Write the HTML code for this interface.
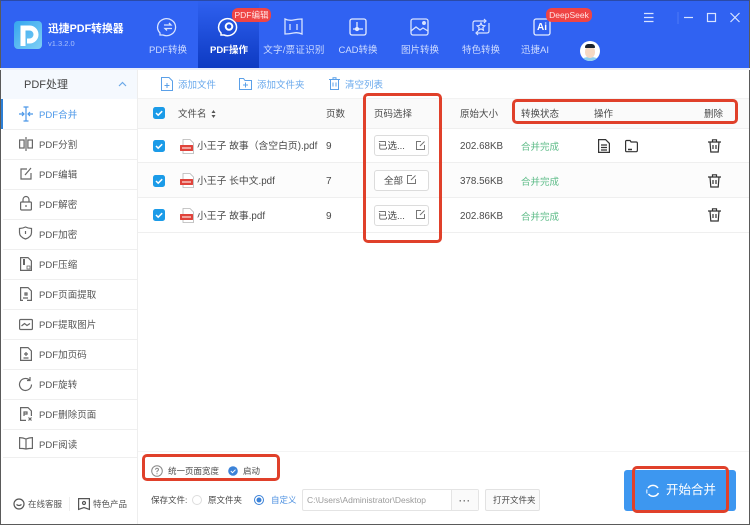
<!DOCTYPE html>
<html><head><meta charset="utf-8"><style>
*{margin:0;padding:0;box-sizing:border-box}
html,body{width:750px;height:525px;overflow:hidden;background:#fff}
body{position:relative;font-family:"Liberation Sans","Noto Sans CJK SC",sans-serif;font-size:9.5px;color:#4a4a4a;filter:blur(.3px)}
.a{position:absolute}
.t{position:absolute;white-space:nowrap;line-height:14px;transform:translateY(2px)}
.n{transform:none}
.hd{color:#cfdcff;font-size:9.5px;top:42px;width:70px;text-align:center}
.sb{left:39px;color:#555;font-size:9.5px;letter-spacing:.05px}
.line{position:absolute;background:#efefef;height:1px}
.box{position:absolute;border:3px solid #e0402a;border-radius:5px}
.chk{position:absolute;left:153px;width:12px;height:12px;border-radius:2.5px;background:#1b9be8}
.chk svg{display:block}
.btn{position:absolute;left:374px;width:55px;height:21px;border:1px solid #dcdcdc;border-radius:3px;background:#fff}
svg{position:absolute;overflow:visible}
</style></head><body>

<!-- header -->
<div class="a" style="left:0;top:0;width:750px;height:68px;background:#3062f2"></div>
<div class="a" style="left:198px;top:0;width:61px;height:68px;background:linear-gradient(#2f61f0,#0d3ac2)"></div>

<!-- logo -->
<div class="a" style="left:14px;top:21px;width:28px;height:28px;border-radius:4px;background:linear-gradient(135deg,#35a5ee,#7fd0f5);overflow:hidden"></div>
<svg style="left:14px;top:21px" width="28" height="28"><path d="M9 25V7h6.500a6.500 6.500 0 0 1 0 13H13" fill="none" stroke="#fff" stroke-width="5"/></svg>
<div class="t n" style="left:48px;top:22px;color:#fff;font-size:10.800px;font-weight:700">迅捷PDF转换器</div>
<div class="t" style="left:48px;top:35px;color:#a9c0fa;font-size:7.500px">v1.3.2.0</div>

<!-- nav icons -->
<svg style="left:158px;top:17px" width="20" height="20" fill="none" stroke="#d8e3ff" stroke-width="1.300"><path d="M2 16a9 8.500 0 1 1 3 2H2z"/><path d="M6 8h7l-2-2M14 11.500H7l2 2"/></svg>
<svg style="left:219px;top:17px" width="20" height="20" fill="none" stroke="#fff" stroke-width="1.500"><path d="M2 16a9 8.500 0 1 1 3 2H2z"/><circle cx="10" cy="9.500" r="3.300" stroke-width="2"/></svg>
<svg style="left:284px;top:18px" width="19" height="17" fill="none" stroke="#d8e3ff" stroke-width="1.300"><path d="M1 1q4 2 8.500 1T18 1v15q-4-2-8.500-1T1 16z"/><path d="M6 6v6M13 6v6"/></svg>
<svg style="left:349px;top:18px" width="18" height="18" fill="none" stroke="#e4ebff" stroke-width="1.300"><rect x="1" y="1" width="16" height="16" rx="2"/><path d="M8 4v7M4 11h10"/><circle cx="8" cy="11" r="1.500" fill="#e4ebff"/></svg>
<svg style="left:410px;top:18px" width="19" height="18" fill="none" stroke="#d8e3ff" stroke-width="1.300"><rect x="1" y="1" width="17" height="16" rx="2"/><path d="M1 13l5-4 4 3 3-2 5 3"/><circle cx="14" cy="5" r="1.300" fill="#d8e3ff"/></svg>
<svg style="left:471px;top:17px" width="20" height="20" fill="none" stroke="#d8e3ff" stroke-width="1.200"><path d="M2 14V6q0-2 2-2h10M18 6v8q0 2-2 2H6"/><path d="M13 2l2 2-2 2M7 14l-2 2 2 2"/><path d="M10 6l1.200 2.500 2.600.3-1.900 1.800.5 2.600-2.400-1.300-2.400 1.300.5-2.600-1.900-1.800 2.600-.3z"/></svg>
<svg style="left:533px;top:18px" width="18" height="18" fill="none" stroke="#e4ebff" stroke-width="1.300"><rect x="1" y="1" width="16" height="16" rx="2"/></svg>
<div class="t n" style="left:537px;top:21px;color:#fff;font-size:10px;font-weight:700">Ai</div>

<div class="t hd" style="left:133px">PDF转换</div>
<div class="t hd" style="left:194px;color:#fff;font-weight:700">PDF操作</div>
<div class="t hd" style="left:259px;letter-spacing:.25px">文字/票证识别</div>
<div class="t hd" style="left:323px">CAD转换</div>
<div class="t hd" style="left:385px">图片转换</div>
<div class="t hd" style="left:446px">特色转换</div>
<div class="t hd" style="left:500px">迅捷AI</div>

<div class="t n" style="left:232px;top:8px;width:39px;height:14px;background:#ef4444;border-radius:6px;color:#ffe5e5;font-size:8.500px;text-align:center">PDF编辑</div>
<div class="t n" style="left:546px;top:8px;width:46px;height:14px;background:#ef4444;border-radius:6px;color:#ffe5e5;font-size:8.500px;text-align:center">DeepSeek</div>

<!-- avatar -->
<div class="a" style="left:580px;top:41px;width:20px;height:20px;border-radius:50%;background:#fff;overflow:hidden">
  <div class="a" style="left:2px;top:16px;width:16px;height:5px;background:#8fd0ee;border-radius:50% 50% 0 0"></div>
  <div class="a" style="left:5px;top:5px;width:10px;height:12px;background:#f6d9c4;border-radius:45%"></div>
  <div class="a" style="left:5px;top:3px;width:10px;height:4px;background:#1c2430;border-radius:4px 4px 1px 1px"></div>
</div>

<!-- window controls -->
<svg style="left:644px;top:12px" width="100" height="12" fill="none" stroke="#d8e3ff" stroke-width="1.200"><path d="M0 1.500h9.500M0 5.500h9.500M0 9.500h9.500"/><path d="M34 0v12" stroke="#4a78f5"/><path d="M40 5.500h9"/><rect x="63.500" y="1.500" width="8" height="8"/><path d="M86.500 1l9 9M95.500 1l-9 9"/></svg>

<!-- sidebar -->
<div class="a" style="left:0;top:70px;width:137px;height:29px;background:#f5f9fe"></div>
<div class="t" style="left:24px;top:77px;font-size:11px;color:#444;transform:translateY(1px)">PDF处理</div>
<svg style="left:118px;top:81px" width="9" height="6" fill="none" stroke="#6aa8e8" stroke-width="1.200"><path d="M1 5l3.500-3.500L8 5"/></svg>
<div class="a" style="left:1px;top:99px;width:2px;height:30px;background:#2c7fd6"></div>
<div class="a" style="left:137px;top:68px;width:1px;height:456px;background:#eeeeee"></div>

<div class="t sb" style="top:107px;color:#4b97e8">PDF合并</div>
<div class="t sb" style="top:137px">PDF分割</div>
<div class="t sb" style="top:167px">PDF编辑</div>
<div class="t sb" style="top:197px">PDF解密</div>
<div class="t sb" style="top:227px">PDF加密</div>
<div class="t sb" style="top:257px">PDF压缩</div>
<div class="t sb" style="top:287px">PDF页面提取</div>
<div class="t sb" style="top:317px">PDF提取图片</div>
<div class="t sb" style="top:347px">PDF加页码</div>
<div class="t sb" style="top:377px">PDF旋转</div>
<div class="t sb" style="top:407px">PDF删除页面</div>
<div class="t sb" style="top:437px">PDF阅读</div>

<div class="line" style="left:3px;top:129px;width:134px"></div>
<div class="line" style="left:3px;top:159px;width:134px"></div>
<div class="line" style="left:3px;top:189px;width:134px"></div>
<div class="line" style="left:3px;top:219px;width:134px"></div>
<div class="line" style="left:3px;top:249px;width:134px"></div>
<div class="line" style="left:3px;top:279px;width:134px"></div>
<div class="line" style="left:3px;top:309px;width:134px"></div>
<div class="line" style="left:3px;top:339px;width:134px"></div>
<div class="line" style="left:3px;top:369px;width:134px"></div>
<div class="line" style="left:3px;top:399px;width:134px"></div>
<div class="line" style="left:3px;top:429px;width:134px"></div>
<div class="line" style="left:3px;top:457px;width:134px"></div>

<!-- sidebar icons -->
<svg style="left:19px;top:106px" width="14" height="16" fill="none" stroke="#4b97e8" stroke-width="1.200"><path d="M7 1v14M4.500 1h5M4.500 15h5M0 8h5M3 6l2 2-2 2M14 8H9M11 6L9 8l2 2"/></svg>
<svg style="left:19px;top:137px" width="14" height="14" fill="none" stroke="#666" stroke-width="1.200"><rect x=".6" y="3" width="4.500" height="8"/><rect x="8.900" y="3" width="4.500" height="8"/><path d="M7 0v14"/></svg>
<svg style="left:20px;top:167px" width="12" height="13" fill="none" stroke="#666" stroke-width="1.200"><path d="M7 2H1v10h10V6"/><path d="M5 8l6-7"/></svg>
<svg style="left:20px;top:196px" width="12" height="15" fill="none" stroke="#666" stroke-width="1.200"><rect x=".6" y="6" width="10.800" height="8" rx="1"/><path d="M3 6V3.500a3 3 0 0 1 6 0V6M6 9v2"/></svg>
<svg style="left:19px;top:226px" width="13" height="14" fill="none" stroke="#666" stroke-width="1.200"><path d="M6.500 1q3 1.500 6 1.500v4q0 4.500-6 6.500-6-2-6-6.500v-4q3 0 6-1.500z"/><path d="M6.500 5v3"/></svg>
<svg style="left:20px;top:257px" width="12" height="14" fill="none" stroke="#666" stroke-width="1.200"><path d="M.6.600h7.400l3.400 3.400v9.400H.6z"/><path d="M4 2v6" stroke-width="2"/><path d="M7 9h3v3H7z" stroke-width=".8"/></svg>
<svg style="left:20px;top:287px" width="12" height="14" fill="none" stroke="#666" stroke-width="1.200"><path d="M3 13.400H.6V.6h7.400l3.400 3.400v9.400H7"/><path d="M5 6h2v2H5zM3 11h5"/></svg>
<svg style="left:19px;top:318px" width="14" height="12" fill="none" stroke="#666" stroke-width="1.200"><rect x=".6" y="1.500" width="12.800" height="10" rx="1"/><path d="M2.500 8l3-2.500 2.500 2 3-2"/></svg>
<svg style="left:20px;top:347px" width="12" height="14" fill="none" stroke="#666" stroke-width="1.200"><path d="M.6.600h7.400l3.400 3.400v9.400H.6z"/><path d="M6 5v4M4 7h4M3.500 11h5"/></svg>
<svg style="left:19px;top:377px" width="13" height="14" fill="none" stroke="#666" stroke-width="1.200"><path d="M10.500 3a6 6 0 1 0 2 4.500"/><path d="M11 0v3.500H8"/></svg>
<svg style="left:20px;top:407px" width="12" height="14" fill="none" stroke="#666" stroke-width="1.200"><path d="M6 13.400H.6V.6h7.400l3.400 3.400v5"/><path d="M4 9V5h3v2H4M8.500 10.500l3 3M11.500 10.500l-3 3"/></svg>
<svg style="left:19px;top:437px" width="14" height="12" fill="none" stroke="#666" stroke-width="1.200"><path d="M7 2Q4 .6.600.6v10.800q3.400 0 6.400 .6 3-.6 6.400-.6V.6Q10 .6 7 2zM7 2v10"/></svg>

<svg style="left:13px;top:498px" width="12" height="12" fill="none" stroke="#555" stroke-width="1.200"><circle cx="6" cy="6" r="5"/><path d="M3.500 6.500q2.500 2 5 0"/></svg>
<div class="t n" style="left:28px;top:497px;font-size:8.500px;color:#555">在线客服</div>
<div class="a" style="left:69px;top:497px;width:1px;height:14px;background:#eee"></div>
<svg style="left:78px;top:498px" width="12" height="12" fill="none" stroke="#555" stroke-width="1.200"><path d="M.6.600h10.800v10.800L6 9.500.6 11.400z"/><circle cx="6" cy="5" r="1.500"/></svg>
<div class="t n" style="left:93px;top:497px;font-size:8.500px;color:#555">特色产品</div>

<!-- toolbar -->
<svg style="left:161px;top:77px" width="12" height="14" fill="none" stroke="#5ba0e8" stroke-width="1"><path d="M.5.500h7.500l3.500 3.500v9.500H.5z"/><path d="M6 6v5M3.500 8.500h5"/></svg>
<div class="t" style="left:178px;top:77px;font-size:9.500px;color:#6aa9ec">添加文件</div>
<svg style="left:239px;top:78px" width="13" height="12" fill="none" stroke="#5ba0e8" stroke-width="1"><path d="M.5 11.500V.5h4l1.500 2h6.500v9z"/><path d="M6.500 4.500v5M4 7h5"/></svg>
<div class="t" style="left:257px;top:77px;font-size:9.500px;color:#6aa9ec">添加文件夹</div>
<svg style="left:329px;top:77px" width="11" height="13" fill="none" stroke="#5ba0e8" stroke-width="1"><path d="M0 2.500h11M4 2.500V.7h3v1.800M1.500 2.500v10h8v-10M4 5.500v4M7 5.500v4"/></svg>
<div class="t" style="left:345px;top:77px;font-size:9.500px;color:#6aa9ec">清空列表</div>

<!-- table -->
<div class="a" style="left:138px;top:98px;width:612px;height:30px;background:#fafafa"></div>
<div class="a" style="left:138px;top:163px;width:612px;height:35px;background:#fcfcfc"></div>
<div class="line" style="left:138px;top:98px;width:611px;background:#f2f2f2"></div>
<div class="line" style="left:138px;top:128px;width:611px"></div>
<div class="line" style="left:138px;top:162px;width:611px"></div>
<div class="line" style="left:138px;top:197px;width:611px"></div>
<div class="line" style="left:138px;top:232px;width:611px"></div>
<div class="line" style="left:138px;top:451px;width:611px;background:#f4f4f4"></div>

<div class="chk" style="top:107px"><svg width="12" height="12" fill="none" stroke="#fff" stroke-width="1.500"><path d="M3 6l2.200 2.200 4-4"/></svg></div>
<div class="chk" style="top:140px"><svg width="12" height="12" fill="none" stroke="#fff" stroke-width="1.500"><path d="M3 6l2.200 2.200 4-4"/></svg></div>
<div class="chk" style="top:175px"><svg width="12" height="12" fill="none" stroke="#fff" stroke-width="1.500"><path d="M3 6l2.200 2.200 4-4"/></svg></div>
<div class="chk" style="top:209px"><svg width="12" height="12" fill="none" stroke="#fff" stroke-width="1.500"><path d="M3 6l2.200 2.200 4-4"/></svg></div>

<div class="t" style="left:178px;top:106px">文件名</div>
<svg style="left:211px;top:110px" width="5" height="8" fill="#555"><path d="M2.500 0l2 3h-4zM2.500 8l-2-3h4z"/></svg>
<div class="t" style="left:326px;top:106px">页数</div>
<div class="t" style="left:374px;top:106px">页码选择</div>
<div class="t" style="left:460px;top:106px">原始大小</div>
<div class="t" style="left:521px;top:106px">转换状态</div>
<div class="t" style="left:594px;top:106px">操作</div>
<div class="t" style="left:704px;top:106px">删除</div>

<!-- pdf icons -->
<svg style="left:180px;top:139px" width="15" height="15"><path d="M3 .5h7l3.500 3.500v10.500H3z" fill="#fff" stroke="#b5b5b5" stroke-width=".8"/><rect x="0" y="6" width="13" height="6" rx=".5" fill="#e0433b"/><path d="M2 9h9" stroke="#f7c4c0" stroke-width="1.500"/></svg>
<svg style="left:180px;top:173px" width="15" height="15"><path d="M3 .5h7l3.500 3.500v10.500H3z" fill="#fff" stroke="#b5b5b5" stroke-width=".8"/><rect x="0" y="6" width="13" height="6" rx=".5" fill="#e0433b"/><path d="M2 9h9" stroke="#f7c4c0" stroke-width="1.500"/></svg>
<svg style="left:180px;top:208px" width="15" height="15"><path d="M3 .5h7l3.500 3.500v10.500H3z" fill="#fff" stroke="#b5b5b5" stroke-width=".8"/><rect x="0" y="6" width="13" height="6" rx=".5" fill="#e0433b"/><path d="M2 9h9" stroke="#f7c4c0" stroke-width="1.500"/></svg>

<div class="t" style="left:197px;top:138px;font-size:9.800px">小王子 故事（含空白页).pdf</div>
<div class="t" style="left:197px;top:173px;font-size:9.800px">小王子 长中文.pdf</div>
<div class="t" style="left:197px;top:208px;font-size:9.800px">小王子 故事.pdf</div>

<div class="t" style="left:326px;top:138px;font-size:10px">9</div>
<div class="t" style="left:326px;top:173px;font-size:10px">7</div>
<div class="t" style="left:326px;top:208px;font-size:10px">9</div>

<div class="btn" style="top:135px"></div><div class="t" style="left:378px;top:138px">已选...</div>
<div class="btn" style="top:170px"></div><div class="t" style="left:384px;top:173px">全部</div>
<div class="btn" style="top:205px"></div><div class="t" style="left:378px;top:208px">已选...</div>
<svg style="left:416px;top:141px" width="9" height="9" fill="none" stroke="#777"><path d="M5 .5H.5v8h8V4M4 5l4.500-4.500"/></svg>
<svg style="left:407px;top:175px" width="9" height="9" fill="none" stroke="#777"><path d="M5 .5H.5v8h8V4M4 5l4.500-4.500"/></svg>
<svg style="left:416px;top:210px" width="9" height="9" fill="none" stroke="#777"><path d="M5 .5H.5v8h8V4M4 5l4.500-4.500"/></svg>

<div class="t" style="left:460px;top:138px;font-size:9.800px">202.68KB</div>
<div class="t" style="left:460px;top:173px;font-size:9.800px">378.56KB</div>
<div class="t" style="left:460px;top:208px;font-size:9.800px">202.86KB</div>

<div class="t" style="left:521px;top:139px;color:#5cbb87">合并完成</div>
<div class="t" style="left:521px;top:174px;color:#5cbb87">合并完成</div>
<div class="t" style="left:521px;top:209px;color:#5cbb87">合并完成</div>

<svg style="left:598px;top:139px" width="12" height="14" fill="none" stroke="#333" stroke-width="1.200"><path d="M.6.600h7l3.800 3.800v9H.6z"/><path d="M3 6h6M3 8.500h6M3 11h6"/></svg>
<svg style="left:625px;top:140px" width="13" height="12" fill="none" stroke="#333" stroke-width="1.200"><path d="M.6 1.500q0-1 1-1h3.500l1 1.500h5q1.300 0 1.300 1.300v6.400q0 2-1.300 2H1.600q-1 0-1-1z"/><path d="M3 9.500h4" stroke-width="1.500"/></svg>
<svg style="left:708px;top:139px" width="13" height="14" fill="none" stroke="#333" stroke-width="1.200"><path d="M0 3h13M4.500 3V.8h4V3M2 3l.8 10h7.400L11 3M5 6v4M8 6v4"/></svg>
<svg style="left:708px;top:174px" width="13" height="14" fill="none" stroke="#333" stroke-width="1.200"><path d="M0 3h13M4.500 3V.8h4V3M2 3l.8 10h7.400L11 3M5 6v4M8 6v4"/></svg>
<svg style="left:708px;top:208px" width="13" height="14" fill="none" stroke="#333" stroke-width="1.200"><path d="M0 3h13M4.500 3V.8h4V3M2 3l.8 10h7.400L11 3M5 6v4M8 6v4"/></svg>

<!-- bottom settings -->
<svg style="left:151px;top:465px" width="12" height="12" fill="none" stroke="#888"><circle cx="6" cy="6" r="5.300"/><path d="M4.500 4.700q.2-1.500 1.500-1.500t1.500 1.300Q7.500 5.500 6 6.300v1M6 8.300v1"/></svg>
<div class="t n" style="left:168px;top:464px;font-size:8.500px">统一页面宽度</div>
<svg style="left:228px;top:466px" width="10" height="10"><circle cx="5" cy="5" r="4.800" fill="#3b82d8"/><path d="M2.800 5l1.700 1.700 3-3" fill="none" stroke="#fff"/></svg>
<div class="t n" style="left:243px;top:464px;font-size:8.500px">启动</div>

<div class="t n" style="left:151px;top:493px;font-size:8.500px">保存文件:</div>
<svg style="left:192px;top:495px" width="10" height="10" fill="#fff" stroke="#ddd"><circle cx="5" cy="5" r="4.500"/></svg>
<div class="t n" style="left:208px;top:493px;font-size:8.500px">原文件夹</div>
<svg style="left:254px;top:495px" width="10" height="10" fill="none" stroke="#3b82d8"><circle cx="5" cy="5" r="4.500"/><circle cx="5" cy="5" r="2.500" fill="#3b82d8" stroke="none"/></svg>
<div class="t n" style="left:271px;top:493px;font-size:8.500px;color:#4b8fe0">自定义</div>
<div class="a" style="left:302px;top:489px;width:177px;height:22px;border:1px solid #e4e4e4;border-radius:2px"></div>
<div class="a" style="left:451px;top:489px;width:1px;height:22px;background:#e4e4e4"></div>
<div class="a" style="left:452px;top:490px;width:26px;height:20px;background:#fafafa"></div>
<div class="t n" style="left:307px;top:493px;font-size:8.500px;color:#9a9a9a">C:\Users\Administrator\Desktop</div>
<div class="t n" style="left:459px;top:494px;font-size:9px;color:#666;font-weight:700;letter-spacing:1px">···</div>
<div class="a" style="left:485px;top:489px;width:55px;height:22px;border:1px solid #e2e2e2;border-radius:2px;background:#fafafa"></div>
<div class="t n" style="left:493px;top:493px;font-size:8.500px">打开文件夹</div>

<!-- start button -->
<div class="a" style="left:624px;top:470px;width:112px;height:41px;background:#3d97f0;border-radius:3px"></div>
<svg style="left:646px;top:484px" width="14" height="14" fill="none" stroke="#fff" stroke-width="1.500"><path d="M2 4a6 6 0 0 1 10 0M12.500 9a6 6 0 0 1-10 1"/><path d="M1 9.500a6 6 0 0 1 0-4" stroke="#bcdcff"/></svg>
<div class="t n" style="left:666px;top:483px;font-size:12.500px;color:#fff">开始合并</div>

<!-- red annotation boxes -->
<div class="box" style="left:363px;top:93px;width:79px;height:150px"></div>
<div class="box" style="left:512px;top:99px;width:226px;height:25px"></div>
<div class="box" style="left:142px;top:454px;width:138px;height:27px"></div>
<div class="box" style="left:632px;top:466px;width:97px;height:47px"></div>

<!-- window border -->
<div class="a" style="left:0;top:0;width:750px;height:525px;border:1px solid #5a5a5a;border-top-color:#2a4aa8"></div>
<div class="a" style="left:0;top:68px;width:750px;height:2px;background:#e9eefc"></div>
</body></html>
